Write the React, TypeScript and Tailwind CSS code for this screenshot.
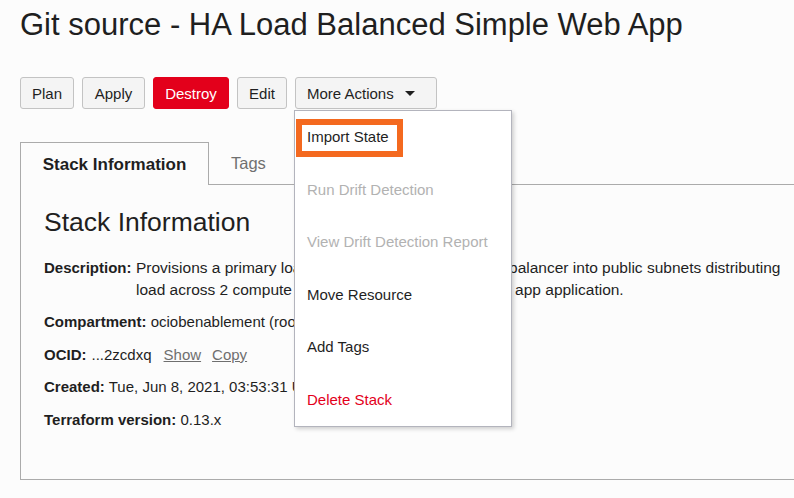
import React from "react";

function Btn({ w, children, danger }: { w: string; children: React.ReactNode; danger?: boolean }) {
  const base =
    "h-[32px] flex items-center justify-center rounded-[3px] border text-[15px] leading-none";
  const tone = danger
    ? "bg-[#e3001b] border-[#e3001b] text-white"
    : "bg-[#f4f4f4] border-[#c3c3c3] text-[#1f1f1f]";
  return <div className={`${base} ${tone} ${w}`}>{children}</div>;
}

function MenuItem({ children, tone }: { children: React.ReactNode; tone?: string }) {
  return (
    <div className={`h-[52.5px] flex items-center pl-[12px] text-[15px] ${tone ?? "text-[#1f1f1f]"}`}>
      {children}
    </div>
  );
}

export default function App() {
  return (
    <div className="relative w-[794px] h-[498px] overflow-hidden bg-[#fcfcfc] text-[#1f1f1f] font-['Liberation_Sans',Arial,sans-serif]">
      <div className="pl-[20px]">
        <h1 className="pt-[7px] text-[31px] leading-[36px] font-normal whitespace-nowrap">
          Git source - HA Load Balanced Simple Web App
        </h1>

        <div className="mt-[34px] flex gap-[8px]">
          <Btn w="w-[54px]">Plan</Btn>
          <Btn w="w-[63px]">Apply</Btn>
          <Btn w="w-[76px]" danger>
            Destroy
          </Btn>
          <Btn w="w-[50px]">Edit</Btn>
          <div className="relative z-10">
            <div className="w-[142px] h-[32px] flex items-center pl-[11px] rounded-[3px] border border-[#c3c3c3] bg-[#f4f4f4] text-[15px] leading-none">
              <span>More Actions</span>
              <svg className="ml-[11px]" width="10" height="5" viewBox="0 0 10 5">
                <polygon points="0,0 10,0 5,5" fill="#1f1f1f" />
              </svg>
            </div>
            <div className="absolute left-[-1px] top-[33px] w-[218px] bg-white border border-[#b3b4bd] shadow-[2px_2px_4px_rgba(0,0,0,0.18)]">
              <div className="relative">
                <MenuItem>Import State</MenuItem>
                <div className="absolute left-[1px] top-[8px] w-[107px] h-[38px] border-[6px] border-[#f4691f]" />
              </div>
              <MenuItem tone="text-[#b2b2b2]">Run Drift Detection</MenuItem>
              <MenuItem tone="text-[#b2b2b2]">View Drift Detection Report</MenuItem>
              <MenuItem>Move Resource</MenuItem>
              <MenuItem>Add Tags</MenuItem>
              <MenuItem tone="text-[#e3001b]">Delete Stack</MenuItem>
            </div>
          </div>
        </div>

        <div className="mt-[33px] flex w-[800px]">
          <div className="w-[189px] h-[43px] pt-[2px] border-t border-l border-r border-[#ababab] flex items-center justify-center font-bold text-[17px]">
            Stack Information
          </div>
          <div className="flex-1 h-[43px] border-b border-[#ababab] flex items-center pl-[22px] text-[16.5px] text-[#707070]">
            Tags
          </div>
        </div>

        <div className="w-[800px] h-[295px] border-l border-b border-[#ababab] pl-[23px] pt-[24px]">
          <h2 className="text-[26.5px] leading-[26.5px] font-normal">Stack Information</h2>
          <div className="mt-[21px] flex flex-col gap-[10.5px] text-[15px] leading-[22px]">
            <div className="flex">
              <span className="w-[92px] shrink-0 font-bold">Description:</span>
              <span className="w-[652px] text-[15.5px]">
                Provisions a primary load balancer and a failover load balancer into public subnets
                distributing load across 2 compute instances hosting a simple web app application.
              </span>
            </div>
            <div className="whitespace-nowrap">
              <span className="font-bold">Compartment:</span> ociobenablement (root)
            </div>
            <div className="flex items-center whitespace-nowrap">
              <span className="font-bold">OCID:</span>
              <span className="ml-[5px]">...2zcdxq</span>
              <span className="ml-[12px] underline text-[#6f6f6f]">Show</span>
              <span className="ml-[11px] underline text-[#6f6f6f]">Copy</span>
            </div>
            <div className="whitespace-nowrap">
              <span className="font-bold">Created:</span> Tue, Jun 8, 2021, 03:53:31 UTC
            </div>
            <div className="whitespace-nowrap">
              <span className="font-bold">Terraform version:</span> 0.13.x
            </div>
          </div>
        </div>
      </div>
    </div>
  );
}
